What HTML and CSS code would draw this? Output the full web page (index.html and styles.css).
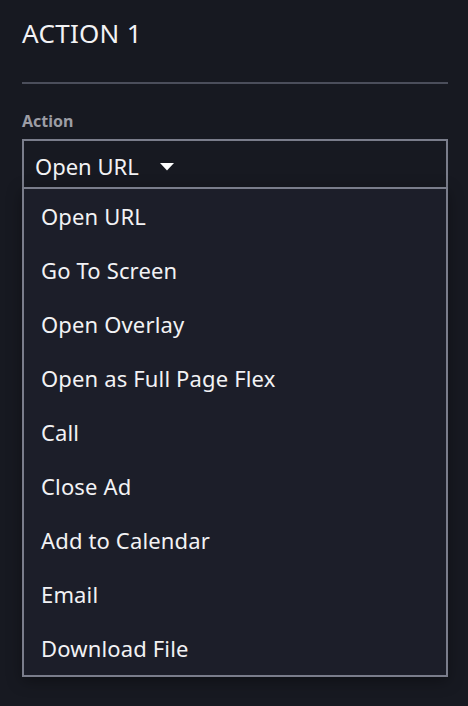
FILE: index.html
```html
<!DOCTYPE html>
<html>
<head>
<meta charset="utf-8">
<link rel="stylesheet" href="styles.css">
</head>
<body>
<div class="panel">
  <h1 class="title">ACTION 1</h1>
  <div class="divider"></div>
  <div class="field">
    <div class="label">Action</div>
    <div class="select">
      <span class="value">Open URL</span>
      <svg class="caret" width="14" height="8" viewBox="0 0 14 8"><path d="M0 0 H14 L7 7.5 Z" fill="#ffffff"/></svg>
    </div>
    <ul class="menu">
      <li class="item">Open URL</li>
      <li class="item">Go To Screen</li>
      <li class="item">Open Overlay</li>
      <li class="item">Open as Full Page Flex</li>
      <li class="item">Call</li>
      <li class="item">Close Ad</li>
      <li class="item">Add to Calendar</li>
      <li class="item">Email</li>
      <li class="item">Download File</li>
    </ul>
  </div>
</div>
</body>
</html>
```
FILE: styles.css
```css
html, body {
  margin: 0;
  padding: 0;
  background: #171921;
  height: 100%;
}
body {
  font-family: "Noto Sans", "Open Sans", sans-serif;
  color: #f2f2f4;
}
.panel {
  padding: 14px 20px 0 22px;
}
.title {
  margin: 0;
  font-size: 26px;
  font-weight: 400;
  line-height: 38px;
  letter-spacing: 0.3px;
}
.divider {
  height: 2px;
  background: #4b4e5b;
  margin-top: 30px;
}
.field {
  margin-top: 26px;
}
.label {
  font-size: 16px;
  font-weight: 700;
  color: #9c9da5;
  line-height: 22px;
}
.select {
  margin-top: 7px;
  border: 2px solid #7a7d8b;
  border-bottom: none;
  display: flex;
  align-items: center;
  padding: 4px 0 0 11px;
  box-sizing: content-box;
  height: 42px;
  font-size: 22px;
}
.value {
  line-height: 30px;
}
.caret {
  margin-left: 21px;
  margin-top: 2px;
}
.menu {
  list-style: none;
  margin: 0;
  padding: 0;
  border: 2px solid #7a7d8b;
  background: #1c1e29;
  box-shadow: 0 4px 14px rgba(0, 0, 0, 0.35);
}
.item {
  height: 54px;
  line-height: 54px;
  font-size: 22px;
  padding-left: 17px;
  letter-spacing: 0.15px;
}
```
